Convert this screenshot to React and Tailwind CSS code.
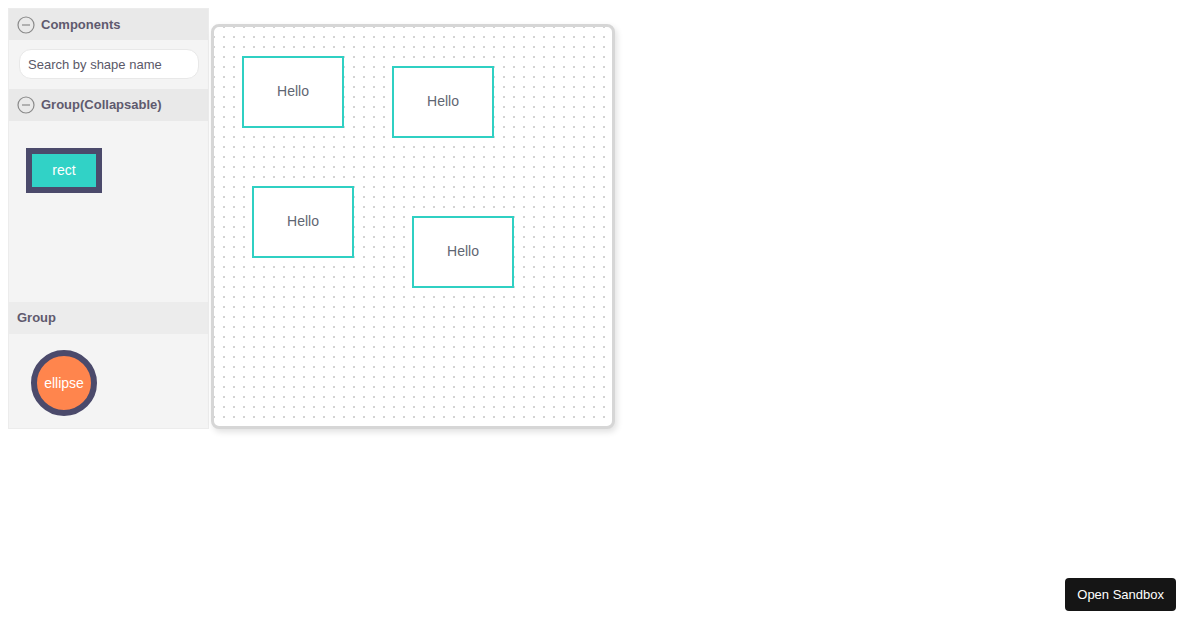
import React from "react";

const MinusCircle = () => (
  <svg width="18" height="18" viewBox="0 0 18 18" className="shrink-0">
    <circle cx="9" cy="9" r="8" fill="none" stroke="#8a8a8a" strokeWidth="1.2" />
    <line x1="5" y1="9" x2="13" y2="9" stroke="#8a8a8a" strokeWidth="1.2" />
  </svg>
);

const nodes = [
  { x: 28, y: 29 },
  { x: 178, y: 39 },
  { x: 38, y: 159 },
  { x: 198, y: 189 },
];

const App = () => {
  return (
    <div className="min-h-screen bg-white p-2 font-['Liberation_Sans',Arial,sans-serif]">
      <div className="flex items-start">
        {/* Sidebar */}
        <div className="w-[201px] h-[421px] bg-[#f4f4f4] border border-[#ececec] flex flex-col">
          <div className="h-[31px] bg-[#e9e9e9] flex items-center gap-[6px] px-[8px]">
            <MinusCircle />
            <span className="text-[13px] font-bold text-[#5f5a6e]">Components</span>
          </div>
          <div className="h-[49px] px-[10px] pt-[9px]">
            <input
              type="text"
              placeholder="Search by shape name"
              className="w-[180px] h-[30px] rounded-[12px] bg-white border border-[#e8e8e8] px-[8px] text-[13px] text-[#555] placeholder:text-[#5a5868] outline-none"
            />
          </div>
          <div className="h-[32px] bg-[#e9e9e9] flex items-center gap-[6px] px-[8px]">
            <MinusCircle />
            <span className="text-[13px] font-bold text-[#5f5a6e]">Group(Collapsable)</span>
          </div>
          <div className="h-[181px] pl-[17px] pt-[27px]">
            <div className="w-[76px] h-[45px] border-[6px] border-[#4b4a6b] bg-[#31d2c6] flex items-center justify-center text-[14px] text-white">
              rect
            </div>
          </div>
          <div className="h-[32px] bg-[#ececec] flex items-center px-[8px]">
            <span className="text-[13px] font-bold text-[#5f5a6e]">Group</span>
          </div>
          <div className="flex-1 pl-[22px] pt-[16px]">
            <div className="w-[66px] h-[66px] rounded-full border-[6px] border-[#4b4a6b] bg-[#ff854d] flex items-center justify-center text-[14px] text-white">
              ellipse
            </div>
          </div>
        </div>

        {/* Canvas */}
        <div className="relative ml-[2px] mt-4 w-[404px] h-[405px] rounded-[8px] border-[3px] border-[#d6d6d6] bg-white bg-[radial-gradient(circle_at_1px_1px,#a4a4a4_0.5px,transparent_0.9px)] bg-[size:10px_10px] bg-[position:-1px_-1px] shadow-[2px_3px_6px_rgba(0,0,0,0.12)]">
          {nodes.map((n, i) => (
            <div
              key={i}
              className="absolute w-[102px] h-[72px] border-2 border-[#2fd0c3] bg-white flex items-center justify-center text-[14px] leading-none pb-[2px] text-[#5f6672]"
              style={{ left: n.x, top: n.y }}
            >
              Hello
            </div>
          ))}
        </div>
      </div>

      <button className="fixed right-[24px] bottom-[19px] h-[33px] px-[12px] rounded-[4px] bg-[#151515] text-white text-[13px]">
        Open Sandbox
      </button>
    </div>
  );
};

export default App;
